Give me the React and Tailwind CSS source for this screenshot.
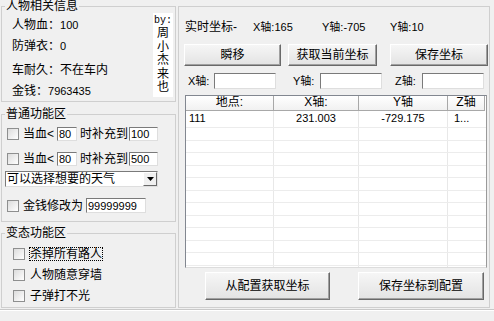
import React from 'react';

function CheckBox() {
  return (
    <span className="block w-[12px] h-[12px] shrink-0 border border-[#8e8f8f] bg-linear-to-br from-[#dcdcdc] to-white" />
  );
}

function Field({ w, value }) {
  return (
    <div
      className={`${w} h-full bg-white border border-t-[#7a7a7a] border-l-[#7a7a7a] border-r-[#dedede] border-b-[#dedede] pl-[1px] text-[11px] leading-[12px] flex items-center`}
    >
      {value}
    </div>
  );
}

function Btn({ className, children }) {
  return (
    <div
      className={`flex items-center justify-center bg-linear-to-b from-[#f6f6f6] to-[#e3e3e3] border border-t-white border-l-white border-r-[#696969] border-b-[#696969] shadow-[inset_-1px_-1px_0_#a0a0a0] text-[12px] ${className}`}
    >
      {children}
    </div>
  );
}

function Group({ title, className, children }) {
  return (
    <fieldset className={`border border-[#cfcfcf] ${className}`}>
      <legend className="ml-[3px] px-[1px] text-[12px] leading-[12px]">{title}</legend>
      {children}
    </fieldset>
  );
}

const rowHeights = ['h-[13px]', 'h-[12px]', 'h-[13px]', 'h-[12px]', 'h-[13px]', 'h-[12px]', 'h-[13px]', 'h-[12px]', 'h-[13px]', 'h-[12px]', 'h-[13px]', 'h-[12px]'];

function ListView() {
  return (
    <div className="ml-[6px] mt-[6px] w-[302px] h-[173px] bg-white border border-t-[#828790] border-l-[#828790] border-r-[#9a9a9a] border-b-[#dcdcdc] overflow-hidden">
      {/* header */}
      <div className="flex h-[15px] text-[12px] leading-[13px]">
        <div className="w-[88px] border-r border-b border-[#a8a8a8] bg-linear-to-b from-white to-[#f1f1f1] text-center">地点:</div>
        <div className="w-[85px] border-r border-b border-[#a8a8a8] bg-linear-to-b from-white to-[#f1f1f1] text-center">X轴:</div>
        <div className="w-[89px] border-r border-b border-[#a8a8a8] bg-linear-to-b from-white to-[#f1f1f1] text-center">Y轴</div>
        <div className="w-[37px] border-r border-b border-[#a8a8a8] bg-linear-to-b from-white to-[#f1f1f1] text-center">Z轴</div>
      </div>
      {/* first row */}
      <div className="flex h-[17px] border-b border-[#ececec] text-[11px] leading-[14px]">
        <div className="w-[88px] border-r border-[#e8e8e8] pl-[3px]">111</div>
        <div className="w-[85px] border-r border-[#e8e8e8] text-center">231.003</div>
        <div className="w-[89px] border-r border-[#e8e8e8] text-center">-729.175</div>
        <div className="w-[37px] pl-[6px]">1...</div>
      </div>
      {rowHeights.map((h, i) => (
        <div key={i} className={`flex ${h} border-b border-[#ececec]`}>
          <div className="w-[88px] border-r border-[#e8e8e8]" />
          <div className="w-[85px] border-r border-[#e8e8e8]" />
          <div className="w-[89px] border-r border-[#e8e8e8]" />
          <div className="w-[37px]" />
        </div>
      ))}
    </div>
  );
}

export default function App() {
  return (
    <div className="w-[494px] h-[321px] bg-[#f0f0f0] overflow-hidden text-black text-[12px] font-['Liberation_Sans','Noto_Sans_CJK_SC',sans-serif]">
      <div className="flex h-[309px]">
        {/* left column */}
        <div className="ml-[1px] w-[175px] flex flex-col">
          <Group title="人物相关信息" className="h-[102px]">
            <div className="flex">
              <div className="pl-[10px] flex flex-col leading-[14px]">
                <div className="mt-[6px] h-[14px]">人物血：<span className="text-[11px]">100</span></div>
                <div className="mt-[7px] h-[14px]">防弹衣：<span className="text-[11px]">0</span></div>
                <div className="mt-[10px] h-[14px]">车耐久：不在车内</div>
                <div className="mt-[7px] h-[14px]">金钱：<span className="text-[11px]">7963435</span></div>
              </div>
              <div className="ml-auto mr-[2px] mt-[1px] w-[20px] h-[84px] bg-white flex flex-col items-center">
                <span className="mt-[3px] text-[10px] leading-[10px] font-['Liberation_Mono',monospace]">by:</span>
                <span className="mt-[1px] text-[12px] leading-[13.5px] text-center">
                  周<br />小<br />杰<br />来<br />也
                </span>
              </div>
            </div>
          </Group>

          <Group title="普通功能区" className="mt-[6px] h-[114px]">
            <div className="flex flex-col">
              <div className="mt-[7px] h-[14px] flex items-center pl-[5px]">
                <CheckBox />
                <span className="ml-[4px] w-[34px]">当血&lt;</span>
                <Field w="w-[20px]" value="80" />
                <span className="ml-[3px] w-[49px]">时补充到</span>
                <Field w="w-[29px]" value="100" />
              </div>
              <div className="mt-[11px] h-[14px] flex items-center pl-[5px]">
                <CheckBox />
                <span className="ml-[4px] w-[34px]">当血&lt;</span>
                <Field w="w-[20px]" value="80" />
                <span className="ml-[3px] w-[49px]">时补充到</span>
                <Field w="w-[29px]" value="500" />
              </div>
              <div className="mt-[5px] ml-[3px] w-[153px] h-[16px] flex items-center bg-white border border-t-[#7a7a7a] border-l-[#7a7a7a] border-r-[#dedede] border-b-[#dedede]">
                <span className="pl-[1px] flex-1">可以选择想要的天气</span>
                <div className="w-[14px] h-[14px] flex items-center justify-center bg-[#f0f0f0] border border-t-white border-l-white border-r-[#696969] border-b-[#696969]">
                  <svg width="7" height="4" viewBox="0 0 7 4">
                    <path d="M0 0h7L3.5 4z" fill="#000" />
                  </svg>
                </div>
              </div>
              <div className="mt-[11px] h-[15px] flex items-center pl-[5px]">
                <CheckBox />
                <span className="ml-[4px] w-[63px]">金钱修改为</span>
                <Field w="w-[60px]" value="99999999" />
              </div>
            </div>
          </Group>

          <Group title="变态功能区" className="mt-[5px] h-[81px]">
            <div className="flex flex-col leading-[12px]">
              <div className="mt-[8px] h-[14px] flex items-center pl-[11px]">
                <CheckBox />
                <span className="ml-[4px] border border-dotted border-black">杀掉所有路人</span>
              </div>
              <div className="mt-[7px] h-[14px] flex items-center pl-[11px]">
                <CheckBox />
                <span className="ml-[4px] border border-transparent">人物随意穿墙</span>
              </div>
              <div className="mt-[7px] h-[14px] flex items-center pl-[11px]">
                <CheckBox />
                <span className="ml-[4px] border border-transparent">子弹打不光</span>
              </div>
            </div>
          </Group>
        </div>

        {/* right panel */}
        <div className="ml-[2px] mt-[6px] w-[312px] h-[302px] border border-[#cfcfcf] flex flex-col">
          <div className="mt-[13px] h-[14px] flex items-center pl-[6px]">
            <span className="w-[68px]">实时坐标-</span>
            <span className="w-[69px] text-[11px]">X轴:165</span>
            <span className="w-[68px] text-[11px]">Y轴:-705</span>
            <span className="text-[11px]">Y轴:10</span>
          </div>
          <div className="mt-[10px] h-[22px] flex pl-[5px]">
            <Btn className="w-[97px]">瞬移</Btn>
            <Btn className="ml-[7px] w-[89px]">获取当前坐标</Btn>
            <Btn className="ml-[13px] w-[98px]">保存坐标</Btn>
          </div>
          <div className="mt-[7px] h-[16px] flex items-center pl-[9px]">
            <span className="w-[26px] text-[11px]">X轴:</span>
            <Field w="w-[62px]" value="" />
            <span className="ml-[17px] w-[27px] text-[11px]">Y轴:</span>
            <Field w="w-[62px]" value="" />
            <span className="ml-[13px] w-[27px] text-[11px]">Z轴:</span>
            <Field w="w-[62px]" value="" />
          </div>
          <ListView />
          <div className="mt-[4px] h-[28px] flex pl-[26px]">
            <Btn className="w-[125px]">从配置获取坐标</Btn>
            <Btn className="ml-[28px] w-[126px]">保存坐标到配置</Btn>
          </div>
        </div>
      </div>
      <div className="h-[1px] bg-[#c8c8c8]" />
      <div className="h-[1px] bg-white" />
    </div>
  );
}
